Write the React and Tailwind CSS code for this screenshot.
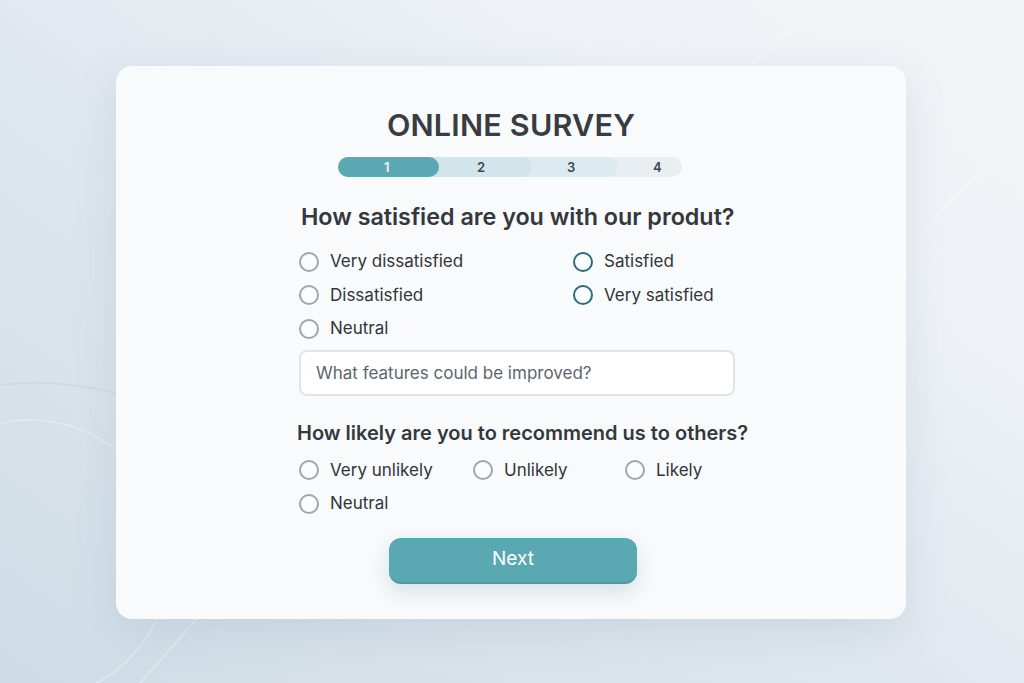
import React from "react";

function Radio({ label, dark }) {
  return (
    <div className="flex items-center h-[33.5px]">
      <span
        className={
          dark
            ? "w-[20px] h-[20px] rounded-full border-[2.5px] border-[#2d6b76] bg-white/40 shrink-0"
            : "w-[20px] h-[20px] rounded-full border-2 border-[#9ba7af] bg-white/40 shrink-0"
        }
      />
      <span className="ml-[11px] text-[17px] text-[#30353a] leading-none">{label}</span>
    </div>
  );
}

export default function App() {
  return (
    <div
      className="relative w-[1024px] h-[683px] overflow-hidden bg-[linear-gradient(35deg,#cfdce5_0%,#dfe7ee_45%,#eef2f6_75%,#f1f4f7_100%)]"
      style={{ fontFamily: "Inter, 'Noto Sans', sans-serif" }}
    >
      <svg className="absolute inset-0" width="1024" height="683" viewBox="0 0 1024 683" fill="none">
        <circle cx="30" cy="560" r="140" stroke="#ffffff" strokeOpacity="0.35" strokeWidth="1.5" />
        <path d="M0 385 C 80 375 160 400 230 440" stroke="#b9cdd8" strokeOpacity="0.5" strokeWidth="1.2" />
        <path d="M920 240 C 960 180 1000 160 1024 150" stroke="#ffffff" strokeOpacity="0.5" strokeWidth="1.2" />
        <path d="M820 0 C 780 40 760 60 720 90" stroke="#ffffff" strokeOpacity="0.5" strokeWidth="1.2" />
        <path d="M140 683 C 180 640 200 610 230 590" stroke="#ffffff" strokeOpacity="0.4" strokeWidth="1.2" />
      </svg>
      <div className="relative flex items-start pt-[66px] pl-[116px]">
        <div className="w-[790px] h-[553px] rounded-[16px] bg-[#f8fafc] shadow-[0_12px_40px_rgba(120,145,165,0.18)] flex flex-col items-center pt-[40px]">
          <h1 className="text-[30.5px] leading-[38px] font-semibold tracking-[0.2px] text-[#393c40]">
            ONLINE SURVEY
          </h1>
          <div className="relative mt-[13px] -ml-[2px] w-[344px] h-[20px]">
            <div className="absolute left-0 top-0 h-[20px] w-[344px] rounded-full bg-[#e8eef2]" />
            <div className="absolute left-0 top-0 h-[20px] w-[280px] rounded-full bg-[#dcebf0]" />
            <div className="absolute left-0 top-0 h-[20px] w-[194px] rounded-full bg-[#d2e5ea]" />
            <div className="absolute left-0 top-0 h-[20px] w-[101px] rounded-full bg-[#5aa8b2]" />
            <div className="absolute inset-0 text-[13px] font-semibold leading-[20px]">
              <span className="absolute left-[46px] text-[#eef7f8]">1</span>
              <span className="absolute left-[139px] text-[#3c4850]">2</span>
              <span className="absolute left-[229px] text-[#3c4850]">3</span>
              <span className="absolute left-[315px] text-[#3c4850]">4</span>
            </div>
          </div>

          <div className="w-[436px] ml-[12px] mt-[25px] flex flex-col">
            <h2 className="text-[23.3px] leading-[30px] font-semibold text-[#34383c] pl-[2px] whitespace-nowrap">
              How satisfied are you with our produt?
            </h2>
            <div className="mt-[13px] grid grid-cols-[274px_1fr]">
              <Radio label="Very dissatisfied" />
              <Radio label="Satisfied" dark />
              <Radio label="Dissatisfied" />
              <Radio label="Very satisfied" dark />
              <Radio label="Neutral" />
            </div>
            <input
              className="mt-[4px] h-[46px] w-[436px] rounded-[8px] border-2 border-[#dde5ec] bg-white px-[15px] text-[17px] text-[#30353a] placeholder:text-[#5c656e] outline-none"
              placeholder="What features could be improved?"
            />
            <h2 className="mt-[23px] -ml-[2px] text-[20px] leading-[28px] font-semibold text-[#34383c] whitespace-nowrap">
              How likely are you to recommend us to others?
            </h2>
            <div className="mt-[7px] grid grid-cols-[174px_152px_1fr]">
              <Radio label="Very unlikely" />
              <Radio label="Unlikely" />
              <Radio label="Likely" />
              <Radio label="Neutral" />
            </div>
          </div>

          <button className="mt-[17px] ml-[4px] w-[248px] h-[46px] rounded-[12px] bg-[#5aa8b2] border-b-2 border-[#4c9aa4] text-white text-[19px] shadow-[0_8px_20px_rgba(90,140,160,0.22)]">
            Next
          </button>
        </div>
      </div>
    </div>
  );
}
